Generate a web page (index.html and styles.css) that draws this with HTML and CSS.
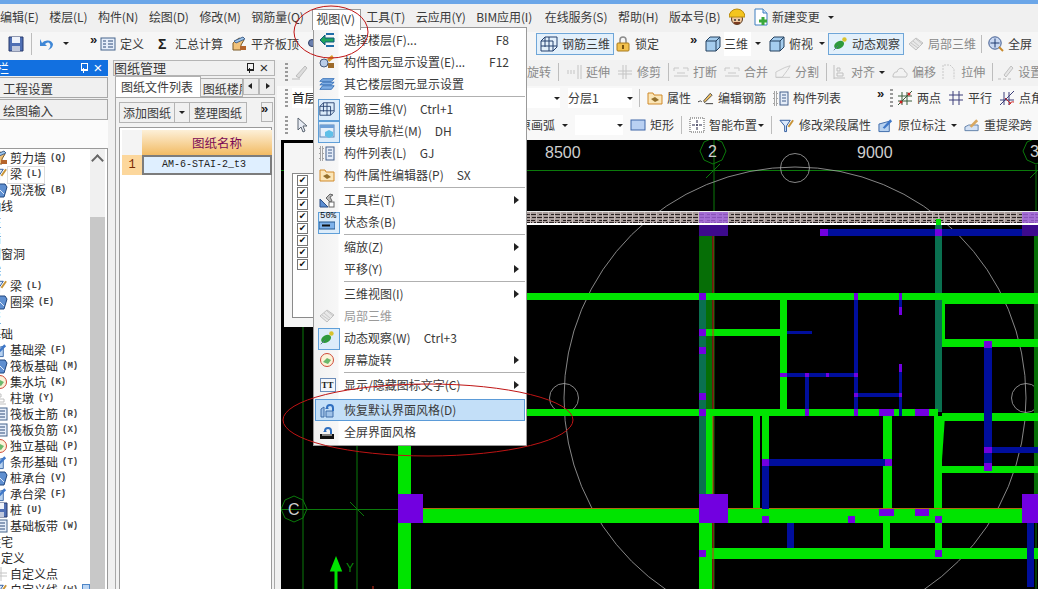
FILE: index.html
```html
<!DOCTYPE html>
<html lang="zh">
<head>
<meta charset="utf-8">
<title>钢筋算量</title>
<link rel="stylesheet" href="styles.css">
</head>
<body>
<svg class="defs" width="0" height="0" aria-hidden="true">
  <defs>
    <symbol id="i-cube" viewBox="0 0 16 16"><path d="M1 5l4-4h10v10l-4 4H1z" fill="#a5cdee" stroke="#24415f"/><path d="M1 5h10v10M11 5l4-4" fill="none" stroke="#24415f"/></symbol>
    <symbol id="i-table" viewBox="0 0 16 16"><rect x="1" y="2" width="14" height="12" fill="#e6eefa" stroke="#46648c"/><path d="M3 5h3M8 5h5M3 8h3M8 8h5M3 11h3M8 11h5" stroke="#2c4a78"/></symbol>
    <symbol id="i-slab" viewBox="0 0 16 16"><path d="M2 14V7l6-5 5 2-3 5v5z" fill="#f1c27a" stroke="#7a5a28"/><path d="M9 14h6v-4H9z" fill="#b5642a"/><path d="M3 5l9-4 2 2-9 4z" fill="#9cc4ea" stroke="#46648c"/></symbol>
    <symbol id="i-save" viewBox="0 0 16 16"><path d="M1 1h14v14H1z" fill="#4f6fb4" stroke="#26386b"/><rect x="4" y="1" width="8" height="6" fill="#eef2fa"/><rect x="4" y="10" width="8" height="5" fill="#c0c8dc"/></symbol>
    <symbol id="i-undo" viewBox="0 0 16 16"><path d="M3 7a6 5 0 0 1 11 1c0 3-2 5-5 6 2-2 3-4 2-6-1-2-3-2-5 0l2 2H1V3z" fill="#3f87d6"/></symbol>
    <symbol id="i-rebar" viewBox="0 0 18 16"><path d="M1 5h12v10H1zM1 5l4-4h12v10l-4 4M5 1v10M9 1v14M1 10h16" fill="none" stroke="#25406e"/></symbol>
    <symbol id="i-lock" viewBox="0 0 16 16"><path d="M5 7V4a3 3 0 0 1 6 0v3" fill="none" stroke="#8c8c8c" stroke-width="1.5"/><rect x="2" y="7" width="12" height="8" rx="1" fill="#f2c14e" stroke="#a87a1c"/><rect x="7" y="9" width="2" height="4" fill="#7a5410"/></symbol>
    <symbol id="i-orbit" viewBox="0 0 18 16"><ellipse cx="8" cy="9" rx="6" ry="4" transform="rotate(-30 8 9)" fill="#2e9a3c"/><circle cx="14" cy="3" r="2.5" fill="#d9c32c"/><path d="M2 15l5-5" stroke="#55708e"/></symbol>
    <symbol id="i-part" viewBox="0 0 16 16"><path d="M1 8l7-6 7 5-7 7z" fill="#e8e8e8" stroke="#c0c0c0"/><path d="M5 5l7 6M8 3l6 5M3 7l7 5" stroke="#c8c8c8"/></symbol>
    <symbol id="i-full" viewBox="0 0 16 16"><circle cx="7" cy="7" r="6.2" fill="#c9d8f2" stroke="#3f5a8e"/><path d="M7 2.500v9M2.500 7h9" stroke="#1f3a70"/><path d="M11 11l4 4" stroke="#c98a2c" stroke-width="2"/></symbol>
    <symbol id="i-brush" viewBox="0 0 16 16"><path d="M4 12L13 2l2 2-8 10z" fill="#dcdcdc" stroke="#bcbcbc"/><path d="M0 15h8" stroke="#bcbcbc"/></symbol>
    <symbol id="i-pointer" viewBox="0 0 16 16"><path d="M4 1v12l3-3 2 5 2-1-2-5h4z" fill="#e8ecf4" stroke="#5a6470"/></symbol>
    <symbol id="i-extend" viewBox="0 0 16 16"><path d="M1 7h9M1 9h9" stroke="#c4c4c4" stroke-dasharray="2 1"/><path d="M12 1v14M15 1v14" stroke="#c4c4c4"/></symbol>
    <symbol id="i-trim" viewBox="0 0 16 16"><path d="M1 7h14M1 10h14" stroke="#c4c4c4"/><path d="M6 1v14M9 1v14" stroke="#c4c4c4"/></symbol>
    <symbol id="i-break" viewBox="0 0 16 16"><path d="M1 4h5M10 4h5M1 12h14M1 4v3M15 4v3M4 9h8" stroke="#c8c8c8" fill="none"/></symbol>
    <symbol id="i-split" viewBox="0 0 18 16"><path d="M1 14V8l10-5 6-2-3 5-6 8z" fill="none" stroke="#c8c8c8"/><path d="M1 14h16" stroke="#c8c8c8"/></symbol>
    <symbol id="i-align" viewBox="0 0 16 16"><path d="M3 1v14M3 14h11M6 4h3v3H6zM6 9h6v3H6z" fill="none" stroke="#c0c0c0"/></symbol>
    <symbol id="i-offset" viewBox="0 0 16 16"><path d="M1 13c0-5 3-5 4-5 1-5 7-5 8 0 2 0 3 3 1 5z" fill="#f2f2f2" stroke="#c0c0c0"/></symbol>
    <symbol id="i-stretch" viewBox="0 0 16 16"><path d="M2 15V1h7l4 4v10" fill="none" stroke="#c8c8c8" stroke-dasharray="2 1"/></symbol>
    <symbol id="i-set" viewBox="0 0 16 16"><path d="M6 11l7-9 2 2-7 9z" fill="#e6e6e6" stroke="#c0c0c0"/><path d="M0 15h3M5 15h3M10 15h3" stroke="#bdbdbd"/></symbol>
    <symbol id="i-prop" viewBox="0 0 16 16"><path d="M1 3h5l1 2h8v9H1z" fill="#fbe6b8" stroke="#d08a2a"/><path d="M4 9l4-2 4 3-4 2z" fill="#94702c"/></symbol>
    <symbol id="i-edit" viewBox="0 0 17 16"><path d="M6 11l7-8 2 2-8 8z" fill="#f0c060" stroke="#4d4d4d"/><path d="M0 12c2 0 2-2 4 0M8 14h8" stroke="#333" fill="none"/></symbol>
    <symbol id="i-parts" viewBox="0 0 16 16"><path d="M1 2h3v3H1zM1 7h3v3H1zM1 12h3v3H1z" fill="none" stroke="#555" stroke-dasharray="1 1"/><rect x="7" y="2" width="8" height="13" fill="#e4ecf8" stroke="#44608c"/><path d="M9 5h4M9 8h4M9 11h4" stroke="#44608c"/></symbol>
    <symbol id="i-twopts" viewBox="0 0 16 16"><path d="M1 15L15 1M5 2v13M10 2v13M1 6h14M1 11h14" stroke="#3a5c3a"/><circle cx="12" cy="4" r="1.500" fill="#c22"/><circle cx="4" cy="12" r="1.500" fill="#c22"/></symbol>
    <symbol id="i-parallel" viewBox="0 0 16 16"><path d="M5 1v14M11 1v14M1 5h14M1 10h14" stroke="#3d3f7a"/></symbol>
    <symbol id="i-angle" viewBox="0 0 16 16"><path d="M1 15L15 1M5 2v13M10 2v13M1 10h14" stroke="#3d3f7a"/><path d="M10 15a4 4 0 0 1 5-3M6 8l6 6" stroke="#c22" fill="none"/></symbol>
    <symbol id="i-rect" viewBox="0 0 16 16"><rect x="1" y="3" width="14" height="10" fill="#b9d0f2" stroke="#3f66a8"/></symbol>
    <symbol id="i-smart" viewBox="0 0 16 16"><rect x="1" y="1" width="14" height="14" fill="#fff" stroke="#555" stroke-dasharray="1 1"/><path d="M8 3v3M8 10v3M3 8h3M10 8h3" stroke="#224"/><circle cx="8" cy="8" r="1" fill="#224"/></symbol>
    <symbol id="i-beam" viewBox="0 0 17 16"><path d="M1 3h11l-4 6v6H6V9z" fill="#dbe9fb" stroke="#2e5a9c"/><path d="M10 10l5-7" stroke="#c89438" stroke-width="2"/></symbol>
    <symbol id="i-mark" viewBox="0 0 17 16"><path d="M1 7l11-3v11H1z" fill="#b8d2f0" stroke="#3a68a8"/><path d="M5 11l8-9 2 2-8 8z" fill="#3f78c8"/></symbol>
    <symbol id="i-span" viewBox="0 0 17 16"><path d="M1 10l4-2h10v6H1z" fill="#d4e2f5" stroke="#5e7ea8"/><path d="M6 9l7-7 2 2-7 7z" fill="#d8a860"/></symbol>
    <symbol id="i-find" viewBox="0 0 16 16"><circle cx="5" cy="7" r="3.500" fill="#6a7fae" stroke="#2f3f66"/><circle cx="11" cy="7" r="3.500" fill="#6a7fae" stroke="#2f3f66"/></symbol>
    <symbol id="i-layers" viewBox="0 0 18 14"><path d="M4 1h13l-3 3H1zM4 5h13l-3 3H1zM4 9h13l-3 4H1z" fill="#7faee4" stroke="#2e6ab4"/></symbol>
    <symbol id="i-select" viewBox="0 0 16 16"><path d="M1 8l5-5v3h9v4H6v3z" fill="#1fa35c" stroke="#0d5a7e"/><path d="M7 2h8M7 14h8" stroke="#1d6ca8" stroke-width="2"/></symbol>
    <symbol id="i-display" viewBox="0 0 16 16"><circle cx="5" cy="9" r="4" fill="#b9cde8" stroke="#465a7a"/><path d="M8 5l5-4 2 3-5 4z" fill="#d99a2c"/><rect x="9" y="9" width="6" height="5" fill="#9c6a2a"/></symbol>
    <symbol id="i-nav" viewBox="0 0 16 16"><rect x="1" y="2" width="14" height="12" fill="#e6f0fb" stroke="#5b86b8"/><rect x="1" y="2" width="14" height="3" fill="#6ea0d8"/><path d="M6 9l4-2 4 2v4l-4 2-4-2z" fill="#5fc0e8"/></symbol>
    <symbol id="i-tools" viewBox="0 0 16 16"><path d="M1 15V7l8 8z" fill="#5d8fd2" stroke="#2c4f86"/><path d="M7 6l4-4 3 1-3 2 2 4-2 1z" fill="#b8b8b8" stroke="#666"/><rect x="10" y="10" width="5" height="5" fill="#fff" stroke="#666"/></symbol>
    <symbol id="i-status" viewBox="0 0 16 16"><rect x="0" y="8" width="16" height="7" fill="#7eb2ea" stroke="#26588e"/><path d="M3 11.500h8" stroke="#111" stroke-width="2"/></symbol>
    <symbol id="i-rotate" viewBox="0 0 16 16"><circle cx="8" cy="8" r="6.500" fill="#fbf3d8" stroke="#d04a3a"/><path d="M4 10l4-4 4 2-3 4z" fill="#6cb86c"/></symbol>
    <symbol id="i-restore" viewBox="0 0 16 16"><path d="M2 15V7l3-2v10zM7 15V9h7v6z" fill="#9fc2e8" stroke="#3f6ca8"/><path d="M7 6a4 4 0 0 1 8 0v3h-2V6a2 2 0 0 0-4 0l1 1H6z" fill="#2f6fc0"/></symbol>
    <symbol id="i-screen" viewBox="0 0 16 16"><path d="M1 10h14v5H1z" fill="#111"/><path d="M3 11h10" stroke="#fff"/><path d="M5 7a4 4 0 0 1 8 0v3h-2V7a2 2 0 0 0-4 0l1 1H4z" fill="#2f6fc0"/></symbol>
    <symbol id="i-pile" viewBox="0 0 16 16"><path d="M2 2h11l2 3-3 10H1z" fill="#5f8fd0" stroke="#20467e"/><path d="M4 4l8 8" stroke="#dfe9f7"/></symbol>
    <pattern id="hatch" width="12" height="12" patternUnits="userSpaceOnUse" patternTransform="translate(527 212)">
      <rect width="12" height="12" fill="#a89c9a"/>
      <path d="M0 2.500h10M0 5.500h3M5 5.500h7M0 8.500h8M0 10.500h5M7 10.500h5" stroke="#2a2222" stroke-width="1"/>
      <path d="M3.500 0v12M9.500 0v12" stroke="#c9bdbb" stroke-width="1"/>
    </pattern>
  </defs>
</svg>

<div class="app">
  <div class="title-strip"></div>

  <nav class="menubar">
    <span class="mb-item">编辑(E)</span>
    <span class="mb-item">楼层(L)</span>
    <span class="mb-item">构件(N)</span>
    <span class="mb-item">绘图(D)</span>
    <span class="mb-item">修改(M)</span>
    <span class="mb-item">钢筋量(Q)</span>
    <span class="mb-item mb-open">视图(V)</span>
    <span class="mb-item">工具(T)</span>
    <span class="mb-item">云应用(Y)</span>
    <span class="mb-item mb-bim">BIM应用(I)</span>
    <span class="mb-item">在线服务(S)</span>
    <span class="mb-item">帮助(H)</span>
    <span class="mb-item">版本号(B)</span>
    <svg class="mb-hat" viewBox="0 0 16 18"><circle cx="8" cy="11" r="5.500" fill="#f0c9a0" stroke="#5a3a20"/><path d="M0 9a8 8 0 0 1 16 0z" fill="#f4c51e" stroke="#b88a10"/><circle cx="6" cy="12" r="1" fill="#333"/><circle cx="10" cy="12" r="1" fill="#333"/><path d="M5 15h6" stroke="#7a3a20" stroke-width="2"/></svg>
    <svg class="mb-doc" viewBox="0 0 16 18"><path d="M2 1h8l4 4v12H2z" fill="#fff" stroke="#3f7fc0"/><path d="M10 1v4h4" fill="#cfe2f6" stroke="#3f7fc0"/><path d="M10 9v8M6 13h8" stroke="#3aa83a" stroke-width="3"/></svg>
    <span class="mb-item mb-new">新建变更</span>
    <span class="caret mb-caret"></span>
  </nav>

  <div class="toolbar toolbar-top">
    <div class="tb-left tb-left-top">
      <svg class="ic t-save"><use href="#i-save"/></svg>
      <span class="vsep t-sep1"></span>
      <svg class="ic t-undo"><use href="#i-undo"/></svg>
      <span class="caret t-undo-caret"></span>
      <span class="more t-more"></span>
      <span class="tool t-def"><svg class="ic"><use href="#i-table"/></svg>定义</span>
      <span class="tool t-sum"><span class="sigma">Σ</span>汇总计算</span>
      <span class="tool t-flush"><svg class="ic"><use href="#i-slab"/></svg>平齐板顶</span>
      <svg class="ic t-find"><use href="#i-find"/></svg>
    </div>
    <div class="tb-group top-group">
      <span class="tool boxed t-rebar"><svg class="ic ic-wide"><use href="#i-rebar"/></svg>钢筋三维</span>
      <span class="tool t-lock"><svg class="ic"><use href="#i-lock"/></svg>锁定</span>
      <span class="more t-more2"></span>
      <span class="tool t-3d"><svg class="ic"><use href="#i-cube"/></svg><span class="white-box">三维</span></span>
      <span class="caret t-c1"></span>
      <span class="tool t-top"><svg class="ic"><use href="#i-cube"/></svg>俯视</span>
      <span class="caret t-c2"></span>
      <span class="tool boxed t-orbit"><svg class="ic"><use href="#i-orbit"/></svg>动态观察</span>
      <span class="tool off t-part"><svg class="ic"><use href="#i-part"/></svg>局部三维</span>
      <span class="vsep t-sep2"></span>
      <span class="tool t-full"><svg class="ic"><use href="#i-full"/></svg>全屏</span>
    </div>
  </div>

  <div class="workspace">
    <aside class="nav-panel">
      <header class="dock-head dock-head-active">
        <span class="dock-title nav-title">导航栏</span>
        <span class="pin"></span>
        <span class="close">×</span>
      </header>
      <div class="nav-section">工程设置</div>
      <div class="nav-section">绘图输入</div>
      <div class="nav-gap"></div>
      <div class="nav-list-box">
        <ul class="nav-list">
          <li class="leaf"><svg class="ic"><use href="#i-slab"/></svg>剪力墙<b>(Q)</b></li>
          <li class="leaf hot"><svg class="ic"><use href="#i-beam"/></svg>梁<b>(L)</b></li>
          <li class="leaf"><svg class="ic"><use href="#i-pile"/></svg>现浇板<b>(B)</b></li>
          <li>轴线</li>
          <li>柱</li>
          <li>墙</li>
          <li>门窗洞</li>
          <li>梁</li>
          <li class="leaf"><svg class="ic"><use href="#i-beam"/></svg>梁<b>(L)</b></li>
          <li class="leaf"><svg class="ic"><use href="#i-pile"/></svg>圈梁<b>(E)</b></li>
          <li>板</li>
          <li>基础</li>
          <li class="leaf"><svg class="ic"><use href="#i-mark"/></svg>基础梁<b>(F)</b></li>
          <li class="leaf"><svg class="ic"><use href="#i-pile"/></svg>筏板基础<b>(M)</b></li>
          <li class="leaf"><svg class="ic"><use href="#i-rotate"/></svg>集水坑<b>(K)</b></li>
          <li class="leaf"><svg class="ic"><use href="#i-align"/></svg>柱墩<b>(Y)</b></li>
          <li class="leaf"><svg class="ic"><use href="#i-table"/></svg>筏板主筋<b>(R)</b></li>
          <li class="leaf"><svg class="ic"><use href="#i-table"/></svg>筏板负筋<b>(X)</b></li>
          <li class="leaf"><svg class="ic"><use href="#i-rotate"/></svg>独立基础<b>(P)</b></li>
          <li class="leaf"><svg class="ic"><use href="#i-mark"/></svg>条形基础<b>(T)</b></li>
          <li class="leaf"><svg class="ic"><use href="#i-pile"/></svg>桩承台<b>(V)</b></li>
          <li class="leaf"><svg class="ic"><use href="#i-mark"/></svg>承台梁<b>(F)</b></li>
          <li class="leaf"><svg class="ic"><use href="#i-save"/></svg>桩<b>(U)</b></li>
          <li class="leaf"><svg class="ic"><use href="#i-table"/></svg>基础板带<b>(W)</b></li>
          <li>住宅</li>
          <li>自定义</li>
          <li class="leaf"><svg class="ic"><use href="#i-trim"/></svg>自定义点</li>
          <li class="leaf"><svg class="ic"><use href="#i-beam"/></svg>自定义线<b>(W)</b><span class="new-tag"></span></li>
        </ul>
        <div class="scrollbar">
          <span class="scroll-up"></span>
          <span class="scroll-thumb"></span>
        </div>
      </div>
    </aside>

    <aside class="drawing-panel">
      <header class="dock-head">
        <span class="dock-title">图纸管理</span>
        <span class="pin pin-dark"></span>
        <span class="close close-dark">×</span>
      </header>
      <div class="tabs">
        <span class="tab tab-on">图纸文件列表</span>
        <span class="tab tab-off">图纸楼层构件</span>
        <span class="tab-arrow tab-arrow-l"></span>
        <span class="tab-arrow tab-arrow-r"></span>
      </div>
      <div class="tab-body">
        <div class="draw-btns">
          <span class="btn btn-add">添加图纸</span>
          <span class="btn btn-drop"><span class="caret"></span></span>
          <span class="btn btn-sort">整理图纸</span>
          <span class="btn btn-more"><span class="more"></span></span>
        </div>
        <div class="sheet">
          <div class="sheet-corner"></div>
          <div class="sheet-head">图纸名称</div>
          <div class="sheet-no">1</div>
          <div class="sheet-cell">AM-6-STAI-2_t3</div>
        </div>
      </div>
    </aside>

    <main class="main-area">
      <div class="toolbar row-edit">
        <div class="tb-left">
          <span class="grip"></span>
          <svg class="ic"><use href="#i-brush"/></svg>
        </div>
        <div class="tb-group off">
          <span>旋转</span>
          <span class="vsep"></span>
          <span class="tool"><svg class="ic"><use href="#i-extend"/></svg>延伸</span>
          <span class="tool"><svg class="ic"><use href="#i-trim"/></svg>修剪</span>
          <span class="vsep"></span>
          <span class="tool tight"><svg class="ic"><use href="#i-break"/></svg>打断</span>
          <span class="tool"><svg class="ic"><use href="#i-break"/></svg>合并</span>
          <span class="tool"><svg class="ic"><use href="#i-split"/></svg>分割</span>
          <span class="vsep"></span>
          <span class="tool tight"><svg class="ic"><use href="#i-align"/></svg>对齐</span>
          <span class="caret tight"></span>
          <span class="tool"><svg class="ic"><use href="#i-offset"/></svg>偏移</span>
          <span class="tool nudge"><svg class="ic"><use href="#i-stretch"/></svg>拉伸</span>
          <span class="vsep"></span>
          <span class="tool nudge"><svg class="ic"><use href="#i-set"/></svg>设置</span>
        </div>
      </div>
      <div class="toolbar row-floor">
        <div class="tb-left">
          <span class="grip"></span>
          <span class="combo combo-floor">首层</span>
        </div>
        <div class="tb-group">
          <span class="combo combo-blank"><span class="caret"></span></span>
          <span class="combo combo-sub">分层1<span class="caret"></span></span>
          <span class="vsep"></span>
          <span class="tool"><svg class="ic"><use href="#i-prop"/></svg>属性</span>
          <span class="tool"><svg class="ic"><use href="#i-edit"/></svg>编辑钢筋</span>
          <span class="tool"><svg class="ic"><use href="#i-parts"/></svg>构件列表</span>
          <span class="more t-more3"></span>
          <span class="grip t-grip2"></span>
          <span class="tool tight"><svg class="ic"><use href="#i-twopts"/></svg>两点</span>
          <span class="tool"><svg class="ic"><use href="#i-parallel"/></svg>平行</span>
          <span class="tool"><svg class="ic"><use href="#i-angle"/></svg>点角</span>
        </div>
      </div>
      <div class="toolbar row-draw">
        <div class="tb-left">
          <span class="grip"></span>
          <svg class="ic ic-pointer"><use href="#i-pointer"/></svg>
        </div>
        <div class="tb-group">
          <span class="arc-label">原画弧</span>
          <span class="caret"></span>
          <span class="combo combo-arc"><span class="caret"></span></span>
          <span class="tool"><svg class="ic"><use href="#i-rect"/></svg>矩形</span>
          <span class="vsep"></span>
          <span class="tool"><svg class="ic"><use href="#i-smart"/></svg>智能布置<span class="caret caret-tight"></span></span>
          <span class="vsep"></span>
          <span class="tool"><svg class="ic"><use href="#i-beam"/></svg>修改梁段属性</span>
          <span class="tool"><svg class="ic"><use href="#i-mark"/></svg>原位标注</span>
          <span class="caret nudge"></span>
          <span class="tool"><svg class="ic"><use href="#i-span"/></svg>重提梁跨</span>
        </div>
      </div>

      <div class="cad">
        <svg class="cad-svg" viewBox="281 140 757 449" width="757" height="449">
          <!-- grid -->
          <g class="grid">
            <path d="M281 170.500H1038M714 140V589M1036 165V589M303 310V589M357 310V589M281 509.500H398"/>
            <path d="M706 178l14-14M1030 178l8-8M350 502l14 14"/>
            <path d="M713 138l9 4 4 9-4 9-9 4-9-4-4-9 4-9zM1036 138l9 4 4 9-4 9-9 4-9-4-4-9 4-9zM294 496l9 4 4 9-4 9-9 4-9-4-4-9 4-9z"/>
          </g>
          <!-- construction circles -->
          <g class="ghost">
            <circle cx="795" cy="398" r="231"/>
            <circle cx="795" cy="168" r="14.500"/>
            <circle cx="564" cy="398" r="14.500"/>
            <circle cx="1026" cy="398" r="14.500"/>
          </g>
          <!-- dark columns -->
          <rect class="dk" x="699" y="236" width="13" height="260"/>
          <rect class="dk" x="1034" y="236" width="4" height="260"/>
          <rect class="te" x="699" y="300" width="7" height="194"/>
          <rect class="te" x="935" y="218" width="7" height="194"/>
          <rect class="gr" x="706" y="416" width="7" height="78"/>
          <!-- green beams -->
          <g class="gr">
            <rect x="398" y="440" width="13" height="149"/>
            <rect x="527" y="293" width="511" height="7"/>
            <rect x="942" y="293" width="96" height="11"/>
            <rect x="942" y="304" width="3" height="35"/>
            <rect x="942" y="339" width="96" height="8"/>
            <rect x="706" y="329" width="74" height="7"/>
            <rect x="780" y="300" width="7" height="109"/>
            <rect x="527" y="409" width="411" height="7"/>
            <rect x="942" y="413" width="96" height="8"/>
            <rect x="942" y="466" width="96" height="7"/>
            <rect x="934" y="416" width="8" height="94"/>
            <polygon points="942,416 945,416 942,460"/>
            <rect x="883" y="416" width="9" height="94"/>
            <rect x="762" y="416" width="7" height="43"/>
            <rect x="753" y="416" width="7" height="94"/>
            <rect x="411" y="509" width="627" height="14"/>
            <rect x="699" y="523" width="13" height="66"/>
            <rect x="883" y="523" width="7" height="25"/>
            <rect x="935" y="523" width="7" height="25"/>
            <rect x="712" y="548" width="326" height="11"/>
          </g>
          <rect class="or" x="423" y="508" width="615" height="1"/>
          <!-- blue beams -->
          <g class="bl">
            <rect x="820" y="229" width="218" height="7"/>
            <rect x="787" y="331" width="25" height="3"/>
            <rect x="854" y="293" width="4" height="123"/>
            <rect x="780" y="373" width="78" height="4"/>
            <rect x="805" y="377" width="4" height="39"/>
            <rect x="899" y="293" width="3" height="22"/>
            <rect x="899" y="364" width="3" height="52"/>
            <rect x="858" y="393" width="42" height="4"/>
            <rect x="984" y="341" width="8" height="130"/>
            <rect x="992" y="447" width="46" height="6"/>
            <rect x="762" y="459" width="130" height="7"/>
            <rect x="762" y="466" width="7" height="43"/>
            <rect x="787" y="523" width="7" height="25"/>
            <rect x="1027" y="523" width="7" height="64"/>
          </g>
          <!-- columns -->
          <g class="pu">
            <rect x="820" y="229" width="8" height="7"/>
            <rect x="935" y="229" width="7" height="7"/>
            <rect x="699" y="293" width="7" height="7"/>
            <rect x="699" y="329" width="7" height="7"/>
            <rect x="699" y="347" width="7" height="7"/>
            <rect x="699" y="393" width="7" height="7"/>
            <rect x="699" y="409" width="7" height="7"/>
            <rect x="854" y="293" width="4" height="7"/>
            <rect x="899" y="293" width="3" height="7"/>
            <rect x="899" y="307" width="3" height="8"/>
            <rect x="899" y="364" width="3" height="8"/>
            <rect x="780" y="373" width="7" height="4"/>
            <rect x="805" y="373" width="4" height="4"/>
            <rect x="826" y="373" width="3" height="4"/>
            <rect x="854" y="373" width="4" height="4"/>
            <rect x="854" y="393" width="4" height="4"/>
            <rect x="899" y="393" width="3" height="4"/>
            <rect x="805" y="409" width="4" height="7"/>
            <rect x="854" y="409" width="4" height="7"/>
            <rect x="879" y="409" width="15" height="7"/>
            <rect x="915" y="409" width="14" height="7"/>
            <rect x="984" y="341" width="8" height="7"/>
            <rect x="984" y="447" width="8" height="6"/>
            <rect x="984" y="463" width="8" height="8"/>
            <rect x="762" y="459" width="7" height="7"/>
            <rect x="885" y="459" width="7" height="7"/>
            <rect x="398" y="494" width="25" height="29"/>
            <rect x="699" y="494" width="29" height="29"/>
            <rect x="1022" y="494" width="16" height="29"/>
            <rect x="762" y="516" width="7" height="7"/>
            <rect x="848" y="516" width="7" height="7"/>
            <rect x="935" y="516" width="7" height="7"/>
            <rect x="879" y="509" width="15" height="7"/>
            <rect x="915" y="509" width="14" height="7"/>
            <rect x="699" y="550" width="7" height="7"/>
            <rect x="935" y="550" width="7" height="7"/>
          </g>
          <rect class="pd" x="699" y="224" width="29" height="12"/>
          <rect class="pd" x="1022" y="224" width="16" height="12"/>
          <path class="red-line" d="M713 236V293M713 300V409M713 416V494M713 523V589"/>
          <!-- stairs band -->
          <rect x="527" y="212" width="511" height="11" fill="url(#hatch)"/>
          <rect class="pl" x="699" y="212" width="29" height="11"/>
          <rect class="pl" x="1022" y="212" width="16" height="11"/>
          <path class="band-edge" d="M527 211.500H1038"/>
          <rect x="527" y="223" width="511" height="2" fill="#fff"/>
          <rect class="gr" x="936" y="219" width="5" height="6"/>
          <!-- labels -->
          <g class="dim">
            <text x="545" y="158">8500</text>
            <text x="857" y="158">9000</text>
            <text x="708" y="157">2</text>
            <text x="1030" y="157">3</text>
            <text x="288" y="515">C</text>
          </g>
          <path class="axis" d="M336 589V568M332 570l4-10 4 10z"/>
          <text class="axis-y" x="346" y="572">Y</text>
          <path class="red-line" d="M373 586v3"/>
        </svg>
        <div class="check-dialog">
          <div class="check-box">
            <span class="chk">✔</span><span class="chk">✔</span><span class="chk">✔</span><span class="chk">✔</span><span class="chk">✔</span><span class="chk">✔</span><span class="chk">✔</span><span class="chk">✔</span>
          </div>
        </div>
      </div>
    </main>
  </div>

  <div class="menu">
    <div class="mi"><span class="mi-ic"><svg class="ic"><use href="#i-select"/></svg></span><span>选择楼层(F)...</span><span class="key key-r">F8</span></div>
    <div class="mi"><span class="mi-ic"><svg class="ic"><use href="#i-display"/></svg></span><span>构件图元显示设置(E)...</span><span class="key key-r">F12</span></div>
    <div class="mi"><span class="mi-ic"><svg class="ic"><use href="#i-layers"/></svg></span><span>其它楼层图元显示设置</span></div>
    <div class="msep"></div>
    <div class="mi"><span class="mi-ic mi-ic-on"><svg class="ic"><use href="#i-rebar"/></svg></span><span>钢筋三维(V)</span><span class="key">Ctrl+1</span></div>
    <div class="mi"><span class="mi-ic mi-ic-on"><svg class="ic"><use href="#i-nav"/></svg></span><span>模块导航栏(M)</span><span class="key">DH</span></div>
    <div class="mi"><span class="mi-ic"><svg class="ic"><use href="#i-parts"/></svg></span><span>构件列表(L)</span><span class="key">GJ</span></div>
    <div class="mi"><span class="mi-ic"><svg class="ic"><use href="#i-prop"/></svg></span><span>构件属性编辑器(P)</span><span class="key">SX</span></div>
    <div class="msep"></div>
    <div class="mi mi-sub"><span class="mi-ic"><svg class="ic"><use href="#i-tools"/></svg></span><span>工具栏(T)</span></div>
    <div class="mi"><span class="mi-ic mi-ic-on mi-ic-status"><span class="pct">50%</span><svg class="ic ic-status"><use href="#i-status"/></svg></span><span>状态条(B)</span></div>
    <div class="msep"></div>
    <div class="mi mi-sub"><span class="mi-ic"></span><span>缩放(Z)</span></div>
    <div class="mi mi-sub"><span class="mi-ic"></span><span>平移(Y)</span></div>
    <div class="msep"></div>
    <div class="mi mi-sub"><span class="mi-ic"></span><span>三维视图(I)</span></div>
    <div class="mi mi-off"><span class="mi-ic"><svg class="ic"><use href="#i-part"/></svg></span><span>局部三维</span></div>
    <div class="mi"><span class="mi-ic mi-ic-on"><svg class="ic"><use href="#i-orbit"/></svg></span><span>动态观察(W)</span><span class="key">Ctrl+3</span></div>
    <div class="mi mi-sub"><span class="mi-ic"><svg class="ic"><use href="#i-rotate"/></svg></span><span>屏幕旋转</span></div>
    <div class="msep"></div>
    <div class="mi mi-sub"><span class="mi-ic"><span class="tt">TT</span></span><span>显示/隐藏图标文字(C)</span></div>
    <div class="msep msep-blank"></div>
    <div class="mi mi-hot"><span class="mi-ic"><svg class="ic"><use href="#i-restore"/></svg></span><span>恢复默认界面风格(D)</span></div>
    <div class="mi"><span class="mi-ic"><svg class="ic"><use href="#i-screen"/></svg></span><span>全屏界面风格</span></div>
  </div>

  <svg class="notes" viewBox="0 0 1038 589" width="1038" height="589" aria-hidden="true">
    <ellipse cx="331" cy="32" rx="37" ry="26"/>
    <ellipse cx="428" cy="420" rx="145" ry="36"/>
  </svg>
</div>
</body>
</html>
```

FILE: styles.css
```css
* { box-sizing: border-box; }
html, body { margin: 0; padding: 0; }
body {
  width: 1038px;
  height: 589px;
  overflow: hidden;
  background: #f0f0f0;
  color: #3a3a3a;
  font: 12px/16px "Noto Sans CJK SC", "Noto Sans", sans-serif;
}
.defs { position: absolute; }
.app { position: relative; width: 1038px; height: 589px; overflow: hidden; display: flex; flex-direction: column; }
.ic { width: 16px; height: 16px; flex: none; display: block; }
.ic-wide { width: 18px; }

.title-strip { height: 4px; background: #6ba6e8; flex: none; }

/* menu bar */
.menubar { height: 28px; flex: none; display: flex; align-items: center; padding-bottom: 2px; background: #f0f0f0; white-space: nowrap; }
.mb-item { margin-right: 10.600px; font-size: 12px; letter-spacing: -0.1px; }
.mb-bim { margin-right: 12.600px; }
.mb-open { height: 21px; margin: 5px 5px 0 -2px; padding: 1px 3px 0; position: relative; z-index: 3; background: #fff; border: 1px solid #9a9a9a; border-bottom: 0; width: 49px; }
.mb-hat { width: 16px; height: 18px; margin: 0 8px 0 -2px; }
.mb-doc { width: 16px; height: 18px; margin-right: 3px; }
.mb-new { margin-right: 0; }
.mb-caret { margin-left: 8px; }

.caret { display: inline-block; flex: none; width: 0; height: 0; border: 3px solid transparent; border-top: 3.500px solid #222; border-bottom: 0; }
.more { display: inline-block; flex: none; width: 10px; height: 12px; position: relative; }
.more::before { content: "»"; position: absolute; left: 0; top: -6px; font: bold 13px/16px "Liberation Sans", sans-serif; color: #222; }
.vsep { flex: none; width: 1px; height: 18px; background: #bdbdbd; }
.grip { flex: none; width: 3px; height: 18px; background: repeating-linear-gradient(to bottom, #9a9a9a 0 2px, transparent 2px 4px); }

/* toolbars */
.toolbar { display: flex; align-items: center; flex: none; white-space: nowrap; overflow: hidden; }
.toolbar-top { height: 28px; padding-bottom: 5px; background: #f6f6f6; }
.tb-left { flex: none; width: 250px; display: flex; align-items: center; gap: 4px; padding-left: 8px; }
.tb-left-top { width: 527px; padding-left: 0; gap: 0; }
.tb-group { flex: none; display: flex; align-items: center; gap: 7px; }
.tool { display: flex; align-items: center; gap: 4px; flex: none; }
.tight { margin-left: -3px; }
.nudge { margin-left: -2px; }
.off { color: #8a8a8a; }
.boxed { height: 22px; padding: 0 3px; background: #e3f0fb; border: 1px solid #6fa6d8; }
.sigma { width: 12px; margin-right: 1px; font: bold 14px/16px "Liberation Sans", sans-serif; color: #222; }
.white-box { background: #fff; padding: 4px 3px 4px 0; margin-left: -1px; }

.t-save { margin-left: 8px; }
.t-sep1 { margin-left: 7px; height: 22px; }
.t-undo { margin-left: 7px; }
.t-undo-caret { margin-left: 8px; }
.t-more { margin-left: 21px; }
.t-def { margin-left: 0; }
.t-sum { margin-left: 14px; }
.t-flush { margin-left: 8px; }
.t-find { margin-left: 8px; }

.top-group { gap: 0; padding-left: 9px; }
.t-lock { margin-left: 1px; }
.t-more2 { margin-left: 31px; }
.t-3d { margin-left: 5px; }
.t-c1 { margin-left: 4px; }
.t-top { margin-left: 8px; }
.t-c2 { margin-left: 6px; }
.t-orbit { margin-left: 3px; }
.t-part { margin-left: 4px; }
.t-sep2 { margin-left: 5px; }
.t-full { margin-left: 6px; }

/* workspace */
.workspace { flex: 1; min-height: 0; display: flex; }

.dock-head { height: 16px; display: flex; align-items: center; position: relative; background: #f0f0f0; border: 1px solid #b4b4b4; }
.dock-head-active { background: #1270e0; border: 0; color: #fff; }
.dock-title { font-size: 13px; white-space: nowrap; }
.pin { width: 9px; height: 10px; margin-left: auto; position: relative; }
.pin::before { content: ""; position: absolute; left: 2px; top: 0; width: 5px; height: 5px; border: 1px solid #fff; border-bottom-width: 2px; }
.pin::after { content: ""; position: absolute; left: 4px; top: 5px; width: 1px; height: 5px; background: #fff; }
.pin-dark::before { border-color: #222; }
.pin-dark::after { background: #222; }
.close { width: 20px; text-align: center; font: 15px/14px "Liberation Sans", sans-serif; color: #fff; }
.close-dark { color: #333; }

.nav-panel { width: 108px; flex: none; display: flex; flex-direction: column; overflow: hidden; margin-right: 5px; }
.nav-title { margin-left: -30px; width: 39px; }
.nav-section { height: 21px; flex: none; margin-top: 1px; padding-left: 3px; line-height: 21px; background: #f0f0f0; border: 1px solid #a8a8a8; border-width: 1px 1px 1px 0; font-size: 12.500px; }
.nav-gap { height: 28px; flex: none; background: #fbfbfb; }
.nav-list-box { flex: 1; min-height: 0; display: flex; background: #fff; border: 1px solid #9a9a9a; border-left: 0; border-bottom: 0; padding-top: 0; padding-right: 2px; overflow: hidden; position: relative; }
.nav-list { flex: 1; min-width: 0; margin: 0 0 0 -11px; padding: 1px 0 0; list-style: none; color: #2a2a2a; white-space: nowrap; overflow: hidden; }
.nav-list li { height: 16px; line-height: 16px; display: flex; align-items: center; }
.nav-list .leaf { padding-left: 3px; gap: 2px; }
.nav-list b { font: 9px/16px "Liberation Mono", monospace; margin-left: 2px; font-weight: bold; color: #444; }
.nav-list .hot { position: relative; }
.nav-list .hot::after { content: ""; position: absolute; left: 18px; top: 0; width: 36px; height: 16px; border: 1px solid #dedede; }
.new-tag { width: 13px; height: 12px; margin-left: 2px; background: #bcd6f4; border: 1px solid #4f86c8; }
.scrollbar { flex: none; width: 15px; display: flex; flex-direction: column; background: #f0f0f0; }
.scroll-up { height: 68px; position: relative; }
.scroll-up::before { content: ""; position: absolute; left: 3px; top: 7px; width: 7px; height: 7px; border: solid #666; border-width: 2px 0 0 2px; transform: rotate(45deg); }
.scroll-thumb { flex: 1; background: #c8c8c8; }

.drawing-panel { width: 164px; flex: none; display: flex; flex-direction: column; overflow: hidden; padding-right: 2px; }
.tabs { height: 21px; flex: none; display: flex; align-items: flex-end; padding-left: 2px; position: relative; }
.tab { height: 21px; padding: 0 5px; line-height: 19px; border: 1px solid #b0b0b0; white-space: nowrap; overflow: hidden; }
.tab-on { width: 87px; background: #fff; border-bottom: 0; font-size: 12px; }
.tab-off { width: 43px; height: 19px; padding: 0 2px 0 2px; border-left: 0; background: #f0f0f0; }
.tab-arrow { width: 16px; height: 17px; margin-bottom: 2px; background: #ececec; border: 1px solid #b8b8b8; position: relative; flex: none; }
.tab-arrow::before { content: ""; position: absolute; top: 4px; left: 4px; border: 3.500px solid transparent; }
.tab-arrow-l::before { border-right: 4px solid #222; border-left: 0; }
.tab-arrow-r::before { border-left: 4px solid #222; border-right: 0; left: 6px; }
.tab-body { flex: 1; min-height: 0; margin-left: 2px; border: 1px solid #a8a8a8; border-bottom: 0; background: #f2f2f2; padding: 4px 2px 0 3px; display: flex; flex-direction: column; }
.draw-btns { height: 21px; flex: none; display: flex; }
.btn { height: 21px; display: flex; align-items: center; justify-content: center; background: #f0f0f0; border: 1px solid #b4b4b4; flex: none; }
.btn-add { width: 56px; }
.btn-drop { width: 14px; border-left: 0; border-right: 0; }
.btn-sort { width: 58px; }
.btn-more { width: 12px; height: 20px; margin-left: 14px; }
.btn-more .more::before { left: -1px; top: -5px; }
.sheet { flex: 1; min-height: 0; margin-top: 4px; padding: 2px 1px 0 2px; background: #fff; border: 1px solid #9a9a9a; border-bottom: 0; display: grid; grid-template-columns: 20px 130px; grid-template-rows: 25px 20px; align-content: start; }
.sheet-corner { background: #f4f4f4; }
.sheet-head { padding-left: 20px; background: linear-gradient(#fdf0d8, #f2bb64); color: #7b0a55; text-align: center; line-height: 25px; font-size: 12.500px; }
.sheet-no { background: #fcd79c; color: #7a2a00; text-align: center; line-height: 20px; font-family: "Liberation Mono", monospace; }
.sheet-cell { padding-right: 6px; background: #dfefff; border: 2px solid #7c7c7c; text-align: center; font: 10px/16px "Liberation Mono", monospace; color: #222; }

.main-area { flex: 1; min-width: 0; display: flex; flex-direction: column; background: #f0f0f0; }
.row-edit { height: 26px; padding-bottom: 2px; background: #f2f2f2; }
.row-floor { height: 26px; padding-bottom: 2px; background: #f8f8f8; }
.row-draw { height: 28px; padding-bottom: 2px; background: #f8f8f8; }
.ic-pointer { margin-left: 2px; }
.combo { display: flex; align-items: center; background: #fff; flex: none; height: 20px; }
.combo-floor { font-size: 12.500px; width: 40px; color: #111; }
.combo-blank { width: 33px; margin-right: 1px; justify-content: flex-end; }
.combo-sub { width: 64px; gap: 28px; }
.combo-arc { width: 48px; justify-content: flex-end; }
.caret-tight { margin-left: -3px; }
.t-more3 { margin-left: 29px; }
.t-grip2 { margin-left: -4px; }
.arc-label { margin-left: -8px; }

.cad { flex: 1; min-height: 0; margin-left: 4px; background: #000; position: relative; overflow: hidden; }
.cad-svg { display: block; }
.grid path { fill: none; stroke: #0b7a0b; stroke-width: 1; }
.ghost circle { fill: none; stroke: #a8a8a8; stroke-width: 0.800; }
.gr { fill: #00e400; }
.dk { fill: #066e06; }
.te { fill: #0a7050; }
.or { fill: #b06a10; }
.bl { fill: #000e9c; }
.pu { fill: #7200e0; }
.pd { fill: #3d0a8c; }
.pl { fill: #a060e0; fill-opacity: 0.800; }
.red-line { fill: none; stroke: #d8301c; stroke-width: 1; }
.band-edge { stroke: #e8e8e8; stroke-width: 1; }
.dim text { fill: #cfcfcf; font: 16px "Liberation Sans", sans-serif; }
.axis { fill: #00e400; stroke: #00e400; stroke-width: 3; stroke-linejoin: miter; }
.axis-y { fill: #0b8a0b; font: 12px "Liberation Sans", sans-serif; }

.check-dialog { position: absolute; left: 3px; top: 3px; width: 60px; height: 184px; background: #f5f5f5; padding: 30px 0 9px 8px; }
.check-box { height: 100%; background: #fff; border: 1px solid #8a8a8a; border-right: 0; padding: 1px 0 0 4px; display: flex; flex-direction: column; gap: 1px; }
.chk { width: 11px; height: 11px; border: 1px solid #777; background: #fff; font: 9px/9px "DejaVu Sans", sans-serif; color: #111; text-align: center; flex: none; }

/* dropdown */
.menu { position: absolute; left: 313px; top: 27px; width: 214px; padding: 1px 1px 2px; background: linear-gradient(to right, #f1f1f1 0, #f7f7f7 24px, #fff 25px); border: 1px solid #9a9a9a; z-index: 2; }
.mi { height: 22px; display: flex; align-items: center; position: relative; color: #3a3a3a; white-space: nowrap; }
.mi-ic { width: 29px; height: 22px; flex: none; display: flex; align-items: center; justify-content: center; padding-right: 5px; position: relative; }
.mi-ic-on::before { content: ""; position: absolute; left: 3px; top: 1px; width: 20px; height: 20px; background: #dcecfa; border: 1px solid #5f9fd8; }
.mi-ic svg { position: relative; }
.key { margin-left: 13px; }
.key-r { margin-left: auto; margin-right: 16px; }
.msep { height: 3px; margin-left: 29px; position: relative; }
.msep::before { content: ""; position: absolute; left: 0; right: 0; top: 1px; height: 1px; background: #b0b0b0; }
.msep-blank::before { display: none; }
.mi-sub::after { content: ""; position: absolute; right: 6px; top: 7px; border: 4px solid transparent; border-left: 5px solid #222; border-right: 0; }
.mi-off { color: #9a9a9a; }
.mi-hot { background: #c3dff8; box-shadow: inset 0 0 0 1px #5b9bd8; }
.pct { position: absolute; left: 5px; top: 1px; font: 9px/9px "Liberation Mono", monospace; color: #111; z-index: 1; }
.tt { width: 16px; height: 14px; display: block; margin-left: 1px; border: 1px solid #6b8cb8; background: #f4f7fb; font: bold 9px/12px "Liberation Serif", serif; text-align: center; color: #222; }

.notes { position: absolute; left: 0; top: 0; z-index: 4; pointer-events: none; }
.notes ellipse { fill: none; stroke: #bf1414; stroke-width: 1; }
```
